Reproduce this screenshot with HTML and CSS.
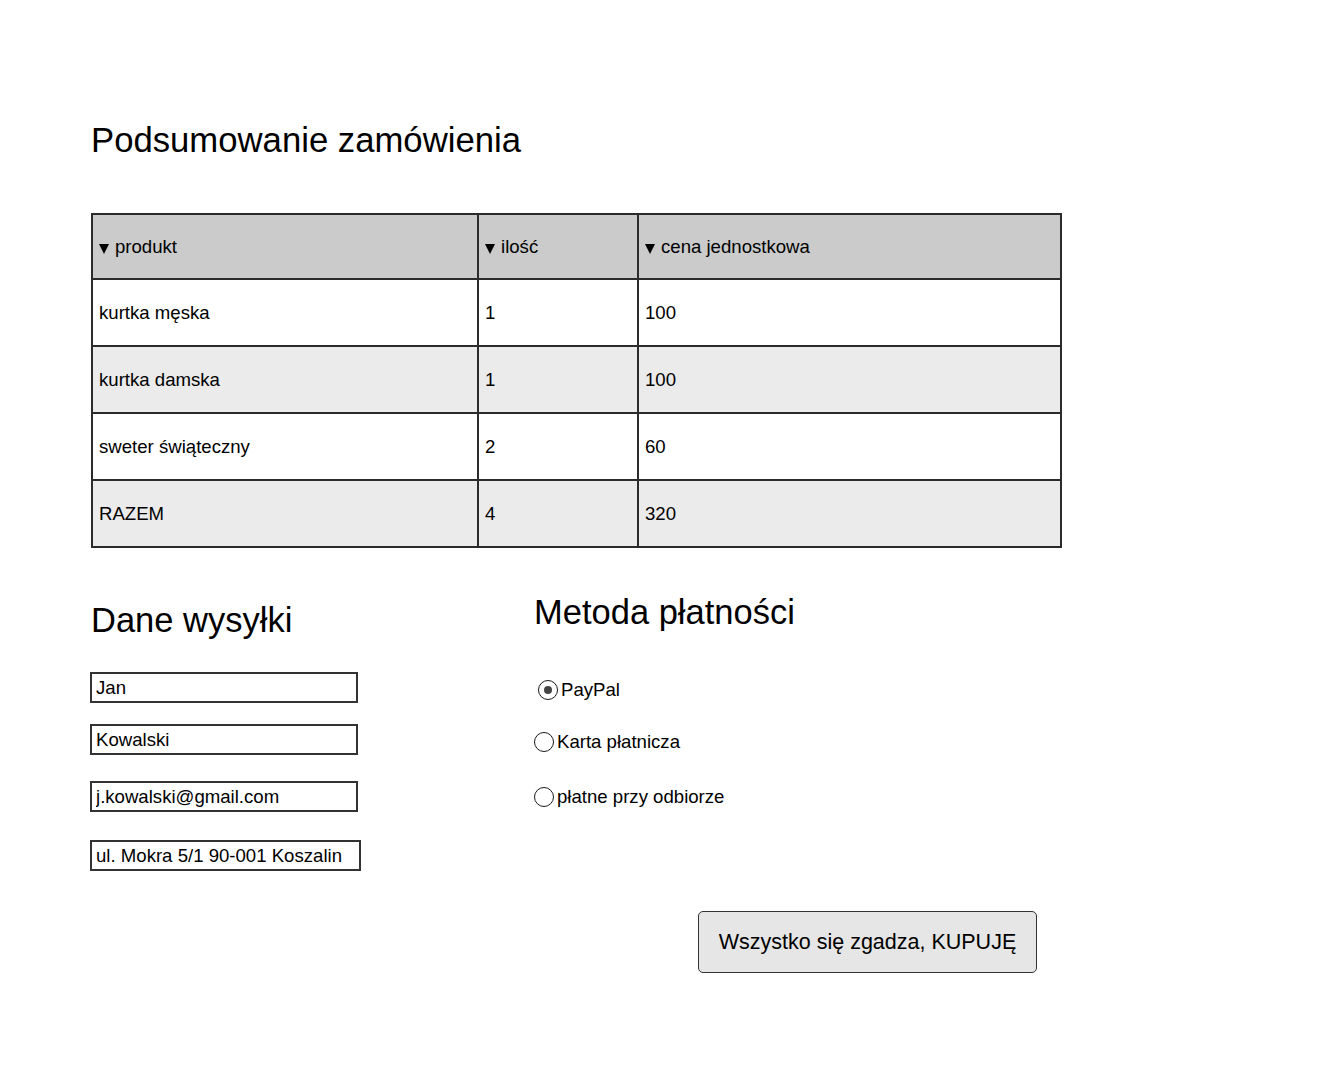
FILE: index.html
```html
<!DOCTYPE html>
<html lang="pl">
<head>
<meta charset="utf-8">
<title>Podsumowanie zamówienia</title>
<link rel="stylesheet" href="styles.css">
</head>
<body>
<main class="page">
  <h1 class="title">Podsumowanie zamówienia</h1>
  <table class="order">
    <thead>
      <tr>
        <th class="col-prod"><span class="arrow"></span>produkt</th>
        <th class="col-qty"><span class="arrow"></span>ilość</th>
        <th class="col-price"><span class="arrow"></span>cena jednostkowa</th>
      </tr>
    </thead>
    <tbody>
      <tr><td>kurtka męska</td><td>1</td><td>100</td></tr>
      <tr class="alt"><td>kurtka damska</td><td>1</td><td>100</td></tr>
      <tr><td>sweter świąteczny</td><td>2</td><td>60</td></tr>
      <tr class="alt"><td>RAZEM</td><td>4</td><td>320</td></tr>
    </tbody>
  </table>

  <div class="lower">
    <section class="shipping">
      <h2 class="sub shipping-title">Dane wysyłki</h2>
      <div class="field f1"><input class="inp" type="text" value="Jan"></div>
      <div class="field f2"><input class="inp" type="text" value="Kowalski"></div>
      <div class="field f3"><input class="inp" type="text" value="j.kowalski@gmail.com"></div>
      <div class="field f4"><input class="inp wide" type="text" value="ul. Mokra 5/1 90-001 Koszalin"></div>
    </section>
    <section class="payment">
      <h2 class="sub payment-title">Metoda płatności</h2>
      <label class="opt o1"><span class="radio checked"></span>PayPal</label>
      <label class="opt o2"><span class="radio"></span>Karta płatnicza</label>
      <label class="opt o3"><span class="radio"></span>płatne przy odbiorze</label>
    </section>
  </div>
  <div class="actions">
    <button class="buy" type="button">Wszystko się zgadza, KUPUJĘ</button>
  </div>
</main>
</body>
</html>
```
FILE: styles.css
```css
* { box-sizing: border-box; }
html, body { margin: 0; padding: 0; background: #fff; }
body {
  font-family: "Liberation Sans", Arial, Helvetica, sans-serif;
  color: #000;
}
.page {
  padding: 118px 0 0 91px;
  width: 1332px;
  height: 1090px;
}
.title {
  margin: 0;
  font-size: 34.7px;
  font-weight: normal;
  line-height: 44px;
}
.order {
  margin-top: 51px;
  border-collapse: collapse;
  width: 971px;
  font-size: 18.6px;
}
.order th, .order td {
  border: 2px solid #2b2b2b;
  text-align: left;
  font-weight: normal;
  padding: 0 6px;
  height: 67px;
}
.order th { background: #cbcbcb; height: 65px; }
.order tr.alt td { background: #ebebeb; }
.col-prod { width: 386px; }
.col-qty { width: 160px; }
.arrow {
  display: inline-block;
  width: 0;
  height: 0;
  border-left: 5.5px solid transparent;
  border-right: 5.5px solid transparent;
  border-top: 10px solid #000;
  margin-right: 6px;
  vertical-align: -1px;
}

.lower {
  display: flex;
  margin-top: 42px;
}
.shipping { width: 443px; }
.sub {
  margin: 0;
  font-size: 34.5px;
  font-weight: normal;
  line-height: 44px;
}
.shipping-title { margin-top: 8px; }
.field { margin-left: -1px; }
.f1 { margin-top: 30px; }
.f2 { margin-top: 21px; }
.f3 { margin-top: 26px; }
.f4 { margin-top: 28px; }
.inp {
  display: block;
  width: 268px;
  height: 31px;
  border: 2px solid #333;
  padding: 0 4px;
  font-family: "Liberation Sans", Arial, sans-serif;
  font-size: 18.6px;
  color: #000;
  background: #fff;
  outline: none;
}
.inp.wide { width: 271px; }

.payment { display: flex; flex-direction: column; }
.opt {
  display: flex;
  align-items: center;
  font-size: 18.6px;
  height: 22px;
}
.o1 { margin-top: 45px; margin-left: 4px; }
.o2 { margin-top: 30px; }
.o3 { margin-top: 33px; }
.radio {
  width: 20px;
  height: 20px;
  border: 1.6px solid #1a1a1a;
  border-radius: 50%;
  margin-right: 3px;
  position: relative;
  flex: none;
}
.radio.checked::after {
  content: "";
  position: absolute;
  left: 4.5px; top: 4.5px;
  width: 8px; height: 8px;
  border-radius: 50%;
  background: #444;
}
.actions {
  margin-top: 40px;
  padding-left: 607px;
}
.buy {
  width: 339px;
  height: 62px;
  border: 1.5px solid #333;
  border-radius: 5px;
  background: #e6e6e6;
  font-family: "Liberation Sans", Arial, sans-serif;
  font-size: 21.5px;
  color: #000;
  padding: 0;
}
```
